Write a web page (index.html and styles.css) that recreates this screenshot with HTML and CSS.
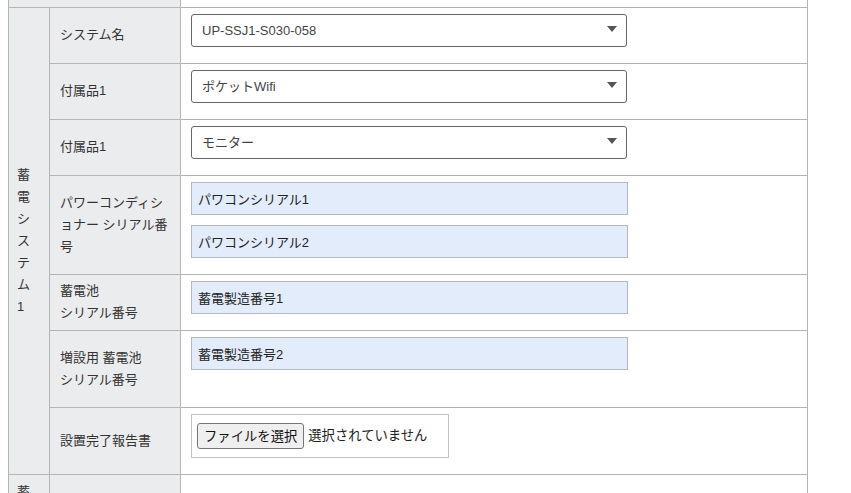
FILE: index.html
```html
<!DOCTYPE html>
<html lang="ja">
<head>
<meta charset="utf-8">
<title>蓄電システム 登録</title>
<link rel="stylesheet" href="styles.css">
</head>
<body>
<table class="form-table">
<colgroup>
<col class="c-group">
<col class="c-label">
<col class="c-field">
</colgroup>
<tr class="cut-row">
<th colspan="2"></th>
<td></td>
</tr>
<tr>
<th class="group" rowspan="7">蓄電システム1</th>
<th class="label">システム名</th>
<td class="field">
<div class="select-wrap">
<select>
<option>UP-SSJ1-S030-058</option>
</select>
</div>
</td>
</tr>
<tr>
<th class="label">付属品1</th>
<td class="field">
<div class="select-wrap">
<select>
<option>ポケットWifi</option>
</select>
</div>
</td>
</tr>
<tr>
<th class="label">付属品1</th>
<td class="field">
<div class="select-wrap">
<select>
<option>モニター</option>
</select>
</div>
</td>
</tr>
<tr>
<th class="label">パワーコンディショナー シリアル番号</th>
<td class="field">
<input class="text" type="text" value="パワコンシリアル1">
<input class="text" type="text" value="パワコンシリアル2">
</td>
</tr>
<tr>
<th class="label">蓄電池<br>シリアル番号</th>
<td class="field">
<input class="text" type="text" value="蓄電製造番号1">
</td>
</tr>
<tr>
<th class="label">増設用 蓄電池<br>シリアル番号</th>
<td class="field">
<input class="text" type="text" value="蓄電製造番号2">
<div class="spacer"></div>
</td>
</tr>
<tr>
<th class="label">設置完了報告書</th>
<td class="field">
<div class="file-box">
<button class="file-btn" type="button">ファイルを選択</button>
<span class="file-name">選択されていません</span>
</div>
</td>
</tr>
<tr>
<th class="group">蓄電システム2</th>
<th class="label"></th>
<td class="field"></td>
</tr>
</table>
</body>
</html>
```
FILE: styles.css
```css
* {
box-sizing: border-box;
}
body {
margin: 0 8px;
font-family: "Liberation Sans", "Noto Sans CJK JP", sans-serif;
font-size: 13px;
color: #333;
background: #fff;
}
.form-table {
border-collapse: collapse;
table-layout: fixed;
width: 800px;
}
.c-group {
width: 41px;
}
.c-label {
width: 131px;
}
.form-table th,
.form-table td {
border: 1px solid #b5b5b5;
font-weight: normal;
text-align: left;
line-height: 22px;
}
.form-table th {
background: #ebecee;
}
.form-table td {
background: #fff;
}
.cut-row th,
.cut-row td {
border-top: 0;
height: 7px;
padding: 0;
}
.group {
vertical-align: middle;
padding: 6px 16px 6px 8px;
}
.label {
vertical-align: middle;
padding: 5px 10px;
}
.field {
vertical-align: top;
padding: 6px 10px;
}
.select-wrap {
position: relative;
width: 436px;
margin-bottom: 10px;
}
.select-wrap::after {
content: "";
position: absolute;
right: 10px;
top: 12px;
border-left: 5px solid transparent;
border-right: 5px solid transparent;
border-top: 6px solid #555;
pointer-events: none;
}
select {
display: block;
width: 100%;
height: 33px;
appearance: none;
-webkit-appearance: none;
background: #fff;
border: 1px solid #666;
border-radius: 3px;
padding: 1px 30px 0 10px;
font: inherit;
color: #444;
}
.text {
display: block;
width: 437px;
height: 33px;
margin: 0 0 10px;
padding: 0 6px;
border: 1px solid #b3b8bf;
background: #e3ecfb;
font: inherit;
color: #222;
}
.spacer {
height: 21px;
}
.file-box {
display: flex;
align-items: center;
width: 258px;
height: 44px;
margin-bottom: 10px;
padding: 0 5px;
border: 1px solid #c2c2c2;
}
.file-btn {
height: 26px;
padding: 0 6px;
border: 1px solid #767676;
border-radius: 3px;
background: #efefef;
font-family: "Liberation Sans", "Noto Sans CJK JP", sans-serif;
font-size: 13.33px;
color: #111;
}
.file-name {
margin-left: 4px;
font-size: 13.33px;
color: #222;
}
```
